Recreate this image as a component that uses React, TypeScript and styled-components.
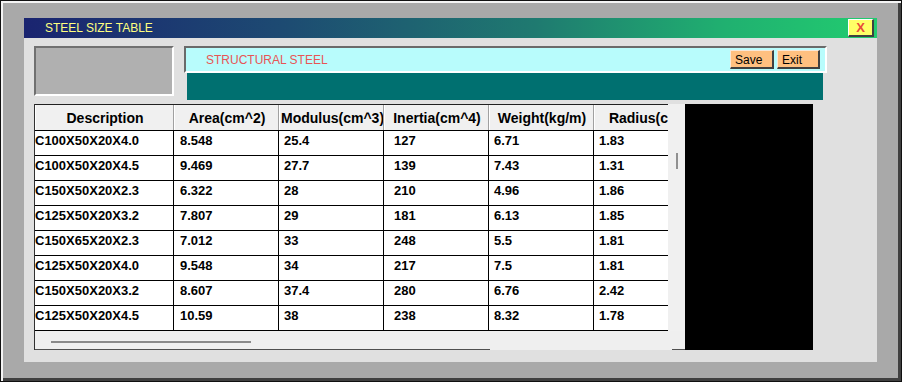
import React from "react";
import styled, { createGlobalStyle } from "styled-components";

const GlobalStyle = createGlobalStyle`
  body {
    margin: 0;
    font-family: "Liberation Sans", Arial, sans-serif;
  }
`;

const Frame = styled.div`
  box-sizing: border-box;
  width: 902px;
  height: 382px;
  background: #a9a9a9;
  border: 1px solid #101010;
  box-shadow: inset 2px 2px #f4f4f4, inset -3px -3px #404040;
  padding: 17px 0 0 23px;
`;

const Window = styled.div`
  display: flex;
  flex-direction: column;
  width: 853px;
  height: 344px;
  background: #e0e0e0;
`;

const TitleBar = styled.div`
  display: flex;
  align-items: center;
  justify-content: space-between;
  height: 20px;
  padding: 0 3px 0 21px;
  background: linear-gradient(to right, #1a2470 0%, #1d4a72 30%, #1f7a70 60%, #20b070 82%, #22cc70 100%);
`;

const Title = styled.span`
  color: #ffff80;
  font-size: 12px;
`;

const CloseButton = styled.div`
  box-sizing: border-box;
  display: flex;
  align-items: center;
  justify-content: center;
  width: 26px;
  height: 18px;
  background: #ffff66;
  border-top: 1px solid #ffffff;
  border-left: 1px solid #ffffff;
  border-right: 2px solid #404040;
  border-bottom: 2px solid #404040;
  color: #e84a3a;
  font-size: 13px;
  font-weight: 700;
`;

const Body = styled.div`
  display: flex;
  flex-direction: column;
  padding: 8px 0 0 10px;
`;

const TopRow = styled.div`
  display: flex;
  gap: 10px;
  height: 54px;
`;

const ImageBox = styled.div`
  box-sizing: border-box;
  width: 140px;
  height: 50px;
  background: #b0b0b0;
  border-top: 2px solid #707070;
  border-left: 2px solid #707070;
  border-right: 2px solid #ffffff;
  border-bottom: 2px solid #ffffff;
`;

const RightGroup = styled.div`
  display: flex;
  flex-direction: column;
  width: 643px;
`;

const CyanBar = styled.div`
  box-sizing: border-box;
  display: flex;
  align-items: center;
  justify-content: space-between;
  height: 27px;
  background: #b8fcfc;
  border-top: 2px solid #6a6a6a;
  border-left: 2px solid #6a6a6a;
  border-right: 2px solid #ffffff;
  border-bottom: 2px solid #ffffff;
  padding: 0 5px 0 20px;
`;

const SectionLabel = styled.span`
  color: #e85555;
  font-size: 12px;
`;

const Buttons = styled.div`
  display: flex;
  gap: 3px;
`;

const ActionButton = styled.div<{ $w: number }>`
  box-sizing: border-box;
  width: ${(p) => p.$w}px;
  height: 19px;
  padding: 2px 0 0 4px;
  background: #ffc080;
  border-top: 1px solid #f8e8d8;
  border-left: 1px solid #f8e8d8;
  border-right: 2px solid #404040;
  border-bottom: 2px solid #404040;
  color: #000;
  font-size: 12px;
  line-height: 14px;
`;

const TealBar = styled.div`
  width: 636px;
  height: 27px;
  margin-left: 3px;
  background: #007070;
`;

const TableRow = styled.div`
  display: flex;
  margin-top: 4px;
`;

const GridBox = styled.div`
  display: grid;
  grid-template-columns: 633px 17px;
  grid-template-rows: 227px 19px;
  border-left: 1px solid #303030;
`;

const Viewport = styled.div`
  overflow: hidden;
  background: #ffffff;
`;

const Row = styled.div<{ $header?: boolean }>`
  display: grid;
  grid-template-columns: 139px 105px 105px 105px 105px 105px;
  width: 664px;
  border-top: ${(p) => (p.$header ? "1px solid #202020" : "none")};
  border-bottom: 1px solid #000;
  height: ${(p) => (p.$header ? "25px" : "24px")};
`;

const HeadCell = styled.div`
  display: flex;
  align-items: center;
  justify-content: safe center;
  padding: 0 0 0 2px;
  white-space: nowrap;
  background: #f0f0f0;
  border-right: 1px solid #a0a0a0;
  box-shadow: inset 1px 0 #ffffff;
  font-size: 14px;
  font-weight: 700;
  color: #000;
  overflow: hidden;
`;

const Cell = styled.div<{ $pad: number }>`
  white-space: nowrap;
  border-right: 1px solid #000;
  padding: 2px 0 0 ${(p) => p.$pad}px;
  font-size: 13px;
  line-height: 15px;
  font-weight: 700;
  color: #000;
`;

const VScroll = styled.div`
  background: #f0f0f0;
`;

const VThumb = styled.div`
  margin: 49px 0 0 8px;
  width: 2px;
  height: 16px;
  background: #909090;
`;

const HScroll = styled.div`
  grid-column: 1 / span 2;
  padding: 10px 0 0 16px;
  background:
    linear-gradient(#505050, #505050) left bottom / 455px 1px no-repeat,
    linear-gradient(#505050, #505050) right bottom / 13px 1px no-repeat,
    #efefef;
`;

const HThumb = styled.div`
  width: 200px;
  height: 2px;
  background: #8a8a8a;
`;

const BlackPanel = styled.div`
  width: 128px;
  height: 246px;
  background: #000;
`;

const headers = [
  "Description",
  "Area(cm^2)",
  "Modulus(cm^3)",
  "Inertia(cm^4)",
  "Weight(kg/m)",
  "Radius(cm)",
];

const pads = [0, 6, 5, 10, 5, 5];

const rows = [
  ["C100X50X20X4.0", "8.548", "25.4", "127", "6.71", "1.83"],
  ["C100X50X20X4.5", "9.469", "27.7", "139", "7.43", "1.31"],
  ["C150X50X20X2.3", "6.322", "28", "210", "4.96", "1.86"],
  ["C125X50X20X3.2", "7.807", "29", "181", "6.13", "1.85"],
  ["C150X65X20X2.3", "7.012", "33", "248", "5.5", "1.81"],
  ["C125X50X20X4.0", "9.548", "34", "217", "7.5", "1.81"],
  ["C150X50X20X3.2", "8.607", "37.4", "280", "6.76", "2.42"],
  ["C125X50X20X4.5", "10.59", "38", "238", "8.32", "1.78"],
];

export default function App() {
  return (
    <>
      <GlobalStyle />
      <Frame>
        <Window>
          <TitleBar>
            <Title>STEEL SIZE TABLE</Title>
            <CloseButton>X</CloseButton>
          </TitleBar>
          <Body>
            <TopRow>
              <ImageBox />
              <RightGroup>
                <CyanBar>
                  <SectionLabel>STRUCTURAL STEEL</SectionLabel>
                  <Buttons>
                    <ActionButton $w={44}>Save</ActionButton>
                    <ActionButton $w={43}>Exit</ActionButton>
                  </Buttons>
                </CyanBar>
                <TealBar />
              </RightGroup>
            </TopRow>
            <TableRow>
              <GridBox>
                <Viewport>
                  <Row $header>
                    {headers.map((h) => (
                      <HeadCell key={h}>{h}</HeadCell>
                    ))}
                  </Row>
                  {rows.map((r) => (
                    <Row key={r[0] + r[1]}>
                      {r.map((v, i) => (
                        <Cell key={i} $pad={pads[i]}>
                          {v}
                        </Cell>
                      ))}
                    </Row>
                  ))}
                </Viewport>
                <VScroll>
                  <VThumb />
                </VScroll>
                <HScroll>
                  <HThumb />
                </HScroll>
              </GridBox>
              <BlackPanel />
            </TableRow>
          </Body>
        </Window>
      </Frame>
    </>
  );
}
